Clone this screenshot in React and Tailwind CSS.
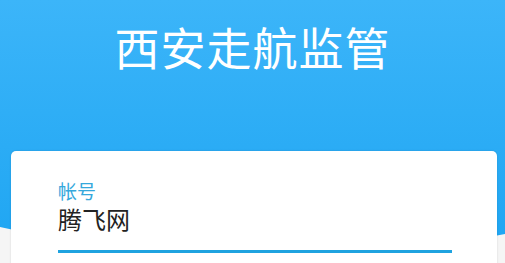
import React from "react";

export default function App() {
  const cjk = { fontFamily: '"Noto Sans CJK SC", "Noto Sans", sans-serif' };
  return (
    <div className="relative h-[263px] w-full overflow-hidden bg-[#f5f5f5]" style={cjk}>
      <svg className="absolute left-0 top-0" width="505" height="263" viewBox="0 0 505 263" aria-hidden="true">
        <defs>
          <linearGradient id="bg" x1="0" y1="0" x2="0" y2="1">
            <stop offset="0" stopColor="#3cb5f9" />
            <stop offset="1" stopColor="#1ea5f2" />
          </linearGradient>
        </defs>
        <path d="M0 0 H505 V234 Q252 285 0 227 Z" fill="url(#bg)" />
      </svg>
      <div className="relative flex flex-col">
        <h1 className="mt-[24px] text-center text-[45px] leading-[46px] font-normal text-white tracking-[1px]">
          西安走航监管
        </h1>
        <div className="ml-[11px] mr-[8px] mt-[81px] h-[140px] rounded-[5px] bg-white shadow-[0_0_2px_rgba(0,0,0,0.15)] pl-[47px] pr-[45px] pt-[30px]">
          <div className="text-[19px] leading-[20px] text-[#35a8dc]">帐号</div>
          <div className="mt-[4px] text-[24px] leading-[28px] text-[#222222]">腾飞网</div>
          <div className="mt-[17px] h-[3px] bg-[#1fa3e0]" />
        </div>
      </div>
    </div>
  );
}
